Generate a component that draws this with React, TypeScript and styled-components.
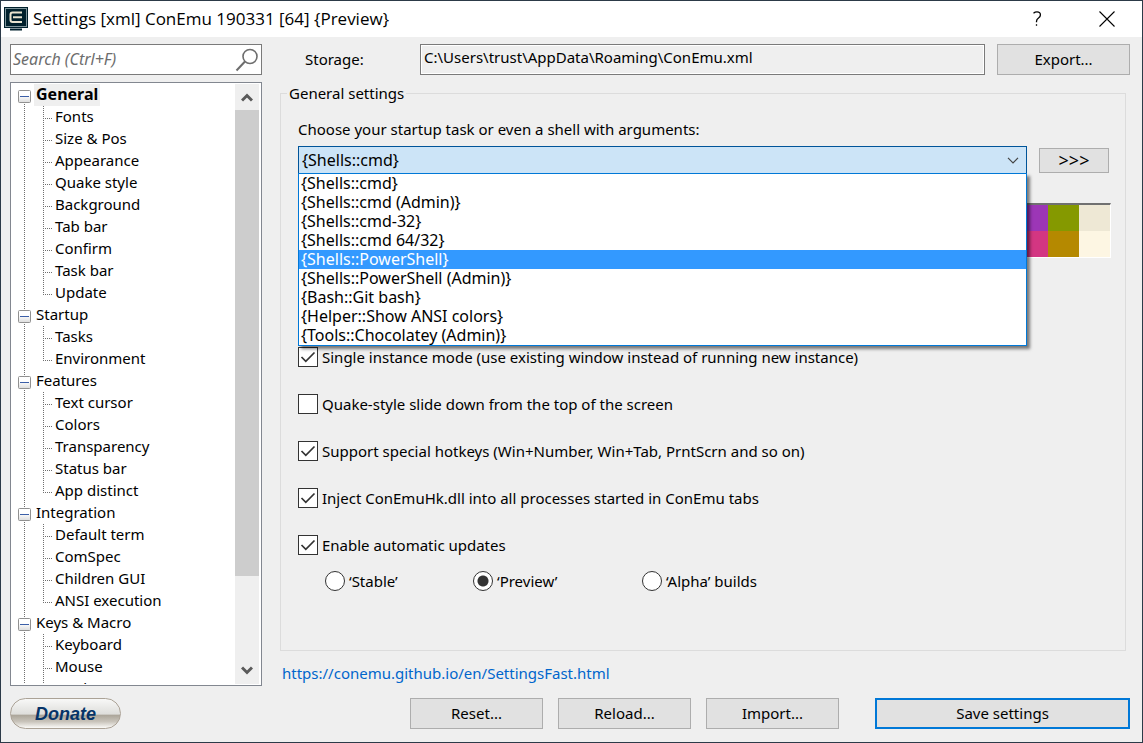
import React from "react";
import styled, { createGlobalStyle, css } from "styled-components";

const GlobalStyle = createGlobalStyle`
  *, *::before, *::after { box-sizing: border-box; }
  body { margin: 0; background: #efefef; }
  body, button, input, select {
    font-family: "Noto Sans", sans-serif;
    font-size: 15px;
    line-height: 20px;
    color: #000;
  }
  ul { list-style: none; margin: 0; padding: 0; }
`;

const dotsDown = "repeating-linear-gradient(to bottom, #707070 0 1px, transparent 1px 2px)";
const dotsAcross = "repeating-linear-gradient(to right, #707070 0 1px, transparent 1px 2px)";

const Window = styled.div`
  display: flex;
  flex-direction: column;
  height: 100vh;
  min-height: 640px;
  border: 1px solid #2c3a48;
  background: #efefef;
`;

const TitleBar = styled.header`
  display: flex;
  align-items: center;
  flex: none;
  height: 36px;
  padding: 0 12px 0 3px;
  background: #fff;
`;

const Title = styled.h1`
  flex: 1;
  margin: 0 0 0 5px;
  font-family: "Open Sans", "Noto Sans", sans-serif;
  font-size: 17px;
  font-weight: 400;
  line-height: 22px;
`;

const CaptionButton = styled.button`
  display: flex;
  align-items: center;
  justify-content: center;
  width: 46px;
  height: 36px;
  margin-left: 24px;
  padding: 0;
  border: 0;
  background: none;
`;

const Body = styled.div`
  display: grid;
  grid-template-columns: 252px minmax(0, 1fr);
  column-gap: 18px;
  flex: 1;
  min-height: 0;
  padding: 7px 12px 13px 9px;
`;

const Sidebar = styled.aside`
  display: flex;
  flex-direction: column;
  min-height: 0;
`;

const SearchBox = styled.label`
  display: flex;
  align-items: center;
  flex: none;
  height: 31px;
  padding: 0 2px;
  border: 1px solid #7a7a7a;
  background: #fff;
`;

const SearchInput = styled.input`
  flex: 1;
  min-width: 0;
  padding: 0 0 2px;
  border: 0;
  outline: 0;
  font-size: 16px;
  background: none;
  &::placeholder { color: #6d6d6d; font-style: italic; opacity: 1; }
`;

const TreePanel = styled.nav`
  display: flex;
  flex: 1;
  min-height: 0;
  margin: 7px 0 12px;
  padding: 1px;
  border: 1px solid #828790;
  background: #fff;
`;

const TreeScroll = styled.div`
  flex: 1;
  overflow: hidden;
  padding-left: 6px;
`;

const RootItem = styled.li`
  background: ${dotsDown} 6px 0 / 1px 100% no-repeat;
  &:first-child { background-position: 6px 12px; }
`;

const RootRow = styled.div`
  display: flex;
  align-items: center;
  height: 22px;
`;

const Toggle = styled.button`
  display: flex;
  width: 13px;
  height: 13px;
  margin-top: 2px;
  padding: 0;
  border: 0;
  background: none;
`;

const NodeLabel = styled.span<{ $current?: boolean }>`
  height: 22px;
  margin-left: 3px;
  padding: 0 2px;
  ${(p) => p.$current && css`
    font-size: 16px;
    font-weight: 700;
    background: #efefef;
  `}
`;

const ChildItem = styled.li`
  height: 22px;
  margin-left: 25px;
  padding-left: 12px;
  background:
    ${dotsDown} 0 0 / 1px 22px no-repeat,
    ${dotsAcross} 0 12px / 9px 1px no-repeat;
  &:last-child {
    background:
      ${dotsDown} 0 0 / 1px 12px no-repeat,
      ${dotsAcross} 0 12px / 9px 1px no-repeat;
  }
`;

const ScrollBar = styled.div`
  display: flex;
  flex-direction: column;
  width: 24px;
  margin-right: 1px;
  background: #efefef;
`;

const ScrollArrow = styled.button`
  display: flex;
  align-items: center;
  justify-content: center;
  flex: none;
  height: 26px;
  padding: 0;
  border: 0;
  background: none;
`;

const ScrollTrack = styled.div`
  flex: 1;
`;

const ScrollThumb = styled.div`
  height: 85%;
  background: #cdcdcd;
`;

const DonateButton = styled.button`
  flex: none;
  width: 111px;
  height: 31px;
  padding: 0;
  border: 1px solid #aba296;
  border-radius: 16px;
  font: italic 700 18px/28px "Liberation Sans", Arial, sans-serif;
  color: #063468;
  background: linear-gradient(to bottom, #f8f8f7 0%, #dededb 52%, #aca69a 56%, #c9c4bb 78%, #fbfaf8 100%);
`;

const Main = styled.main`
  display: flex;
  flex-direction: column;
  min-width: 0;
  min-height: 0;
`;

const StorageRow = styled.div`
  display: flex;
  gap: 12px;
  flex: none;
  height: 31px;
  padding-left: 25px;
`;

const StorageLabel = styled.label`
  width: 103px;
  line-height: 30px;
`;

const StorageInput = styled.input`
  flex: 1;
  min-width: 0;
  padding: 0 3px 5px;
  border: 1px solid #7a7a7a;
  box-shadow: inset 0 0 0 1px #fff;
  background: #efefef;
  outline: 0;
`;

const PushButton = styled.button<{ $width: number; $primary?: boolean }>`
  flex: none;
  width: ${(p) => p.$width}px;
  height: 31px;
  padding: 0 0 1px;
  border: ${(p) => (p.$primary ? "2px solid #0078d7" : "1px solid #adadad")};
  background: #e1e1e1;
`;

const Group = styled.fieldset`
  flex: 1;
  min-width: 0;
  min-height: 0;
  margin: 8px 4px 0 0;
  padding: 16px 16px 0 17px;
  border: 1px solid #dcdcdc;
`;

const Legend = styled.legend`
  margin-left: -11px;
  padding: 0 2px;
`;

const TaskLabel = styled.label`
  display: block;
  margin-bottom: 7px;
`;

const TaskRow = styled.div`
  display: flex;
  align-items: center;
  gap: 12px;
`;

const ComboBox = styled.div`
  position: relative;
  display: flex;
  flex: 1;
  height: 28px;
`;

const ComboSelect = styled.select`
  flex: 1;
  min-width: 0;
  padding: 0 3px 1px;
  appearance: none;
  border: 1px solid #005499;
  border-radius: 0;
  outline: 0;
  font-size: 16px;
  background: #cce4f7;
`;

const ComboArrow = styled.svg`
  position: absolute;
  right: 8px;
  top: 11px;
  pointer-events: none;
`;

const DropList = styled.ul`
  position: absolute;
  z-index: 2;
  top: 27px;
  left: 0;
  right: 0;
  border: 1px solid #0078d7;
  background: #fff;
  box-shadow: 3px 3px 3px rgba(0, 0, 0, 0.5);
`;

const DropItem = styled.li<{ $active?: boolean }>`
  height: 19px;
  padding-left: 2px;
  font-size: 16px;
  line-height: 19px;
  ${(p) => p.$active && css`
    color: #fff;
    background: #3399ff;
  `}
`;

const MoreButton = styled(PushButton)`
  height: 25px;
  font-size: 18px;
`;

const Palette = styled.div`
  display: grid;
  grid-template-columns: repeat(8, 31px);
  grid-auto-rows: 26px;
  width: 250px;
  margin: 29px -2px 89px auto;
  border: 1px solid #fff;
  border-top: 2px solid #707070;
`;

const Swatch = styled.div<{ $color: string }>`
  background: ${(p) => p.$color};
`;

const OptionList = styled.div`
  display: grid;
  gap: 27px;
`;

const OptionLabel = styled.label`
  display: flex;
  align-items: center;
  gap: 4px;
  height: 20px;
`;

const CheckMark = styled.span`
  display: grid;
  width: 20px;
  height: 20px;
  border: 1px solid #333;
  background: #fff;
`;

const CheckInput = styled.input`
  grid-area: 1 / 1;
  width: 18px;
  height: 18px;
  margin: 0;
  appearance: none;
  &:not(:checked) + svg { display: none; }
`;

const CheckDrawing = styled.svg`
  grid-area: 1 / 1;
  pointer-events: none;
`;

const RadioRow = styled.div`
  display: grid;
  grid-template-columns: 148px 169px auto;
  justify-content: start;
  margin: 16px 0 0 27px;
`;

const RadioInput = styled.input`
  width: 20px;
  height: 20px;
  margin: 0;
  appearance: none;
  border: 1px solid #333;
  border-radius: 50%;
  background: #fff;
  &:checked { background: radial-gradient(circle, #333 0 5px, #fff 6px); }
`;

const HelpLink = styled.a`
  align-self: flex-start;
  margin: 12px 0 15px 2px;
  color: #0066cc;
  text-decoration: none;
`;

const Footer = styled.footer`
  display: flex;
  flex: none;
  justify-content: flex-end;
  gap: 15px;
`;

const SaveSlot = styled.div`
  display: flex;
  margin-left: 21px;
`;

const tree = [
  { name: "General", children: ["Fonts", "Size & Pos", "Appearance", "Quake style", "Background", "Tab bar", "Confirm", "Task bar", "Update"] },
  { name: "Startup", children: ["Tasks", "Environment"] },
  { name: "Features", children: ["Text cursor", "Colors", "Transparency", "Status bar", "App distinct"] },
  { name: "Integration", children: ["Default term", "ComSpec", "Children GUI", "ANSI execution"] },
  { name: "Keys & Macro", children: ["Keyboard", "Mouse", "Mark/Copy"] },
];

const tasks = [
  "{Shells::cmd}",
  "{Shells::cmd (Admin)}",
  "{Shells::cmd-32}",
  "{Shells::cmd 64/32}",
  "{Shells::PowerShell}",
  "{Shells::PowerShell (Admin)}",
  "{Bash::Git bash}",
  "{Helper::Show ANSI colors}",
  "{Tools::Chocolatey (Admin)}",
];

const swatches = [
  "#002b36", "#073642", "#586e75", "#657b83", "#dc322f", "#9c36b6", "#859900", "#eee8d5",
  "#839496", "#268bd2", "#2aa198", "#93a1a1", "#cb4b16", "#d33682", "#b58900", "#fdf6e3",
];

const options = [
  { text: "Single instance mode (use existing window instead of running new instance)", on: true },
  { text: "Quake-style slide down from the top of the screen", on: false },
  { text: "Support special hotkeys (Win+Number, Win+Tab, PrntScrn and so on)", on: true },
  { text: "Inject ConEmuHk.dll into all processes started in ConEmu tabs", on: true },
  { text: "Enable automatic updates", on: true },
];

const AppIcon = () => (
  <svg width="24" height="24" viewBox="0 0 24 24" aria-hidden="true">
    <rect width="24" height="21" fill="#00202c" />
    <rect x="1.5" y="1.5" width="21" height="18" fill="none" stroke="#7f959b" />
    <path d="M18 5.500H8.500q-2 0-2 2V13q0 2 2 2H18M9 10.200h9" fill="none" stroke="#e9e4d0" strokeWidth="2" />
    <path d="M6 22.500h12" stroke="#00202c" strokeWidth="2" />
  </svg>
);

const SearchIcon = () => (
  <svg width="24" height="26" viewBox="0 0 24 26" fill="none" stroke="#6d6d6d" aria-hidden="true">
    <circle cx="15" cy="9.5" r="7" strokeWidth="1.6" />
    <path d="M10 14.500L1.500 23.500" strokeWidth="2" />
  </svg>
);

const MinusBox = () => (
  <svg width="13" height="13" viewBox="0 0 13 13" aria-hidden="true">
    <defs>
      <linearGradient id="box" x1="0" y1="0" x2="0" y2="1">
        <stop offset="0.4" stopColor="#fff" />
        <stop offset="1" stopColor="#dcdcdc" />
      </linearGradient>
    </defs>
    <rect x="0.5" y="0.5" width="12" height="12" rx="1" fill="url(#box)" stroke="#919191" />
    <path d="M2 6.500h9" stroke="#3c5fa8" />
  </svg>
);

const Chevron = ({ down }: { down?: boolean }) => (
  <svg width="12" height="10" viewBox="0 0 12 10" aria-hidden="true">
    <path d={down ? "M1 1.5L6 6.5L11 1.5" : "M1 8.5L6 3.5L11 8.5"} fill="none" stroke="#5a5a5a" strokeWidth="3" />
  </svg>
);

export default function App() {
  return (
    <>
      <GlobalStyle />
      <Window>
        <TitleBar>
          <AppIcon />
          <Title>Settings [xml] ConEmu 190331 [64] {"{Preview}"}</Title>
          <CaptionButton aria-label="Help">
            <svg width="10" height="16" viewBox="0 0 10 16" fill="none" stroke="#000" strokeWidth="1.3" aria-hidden="true">
              <path d="M1.500 2.200Q3 .9 5 .9q3.400 0 3.400 3 0 1.700-1.900 3.200-2 1.500-2 3.400v.8M4.500 13.200v1.600" />
            </svg>
          </CaptionButton>
          <CaptionButton aria-label="Close">
            <svg width="16" height="16" viewBox="0 0 16 16" stroke="#000" strokeWidth="1.1" aria-hidden="true">
              <path d="M.5.5l15 15M15.500.500l-15 15" />
            </svg>
          </CaptionButton>
        </TitleBar>
        <Body>
          <Sidebar>
            <SearchBox>
              <SearchInput type="text" placeholder="Search (Ctrl+F)" aria-label="Search" />
              <SearchIcon />
            </SearchBox>
            <TreePanel aria-label="Settings pages">
              <TreeScroll>
                <ul>
                  {tree.map((node, i) => (
                    <RootItem key={node.name}>
                      <RootRow>
                        <Toggle aria-label={"Collapse " + node.name}><MinusBox /></Toggle>
                        <NodeLabel $current={i === 0}>{node.name}</NodeLabel>
                      </RootRow>
                      <ul>
                        {node.children.map((c) => <ChildItem key={c}>{c}</ChildItem>)}
                      </ul>
                    </RootItem>
                  ))}
                </ul>
              </TreeScroll>
              <ScrollBar>
                <ScrollArrow aria-label="Scroll up"><Chevron /></ScrollArrow>
                <ScrollTrack><ScrollThumb /></ScrollTrack>
                <ScrollArrow aria-label="Scroll down"><Chevron down /></ScrollArrow>
              </ScrollBar>
            </TreePanel>
            <DonateButton>Donate</DonateButton>
          </Sidebar>
          <Main>
            <StorageRow>
              <StorageLabel htmlFor="storage">Storage:</StorageLabel>
              <StorageInput id="storage" readOnly value={"C:\\Users\\trust\\AppData\\Roaming\\ConEmu.xml"} />
              <PushButton $width={133}>Export...</PushButton>
            </StorageRow>
            <Group>
              <Legend>General settings</Legend>
              <TaskLabel htmlFor="task">Choose your startup task or even a shell with arguments:</TaskLabel>
              <TaskRow>
                <ComboBox>
                  <ComboSelect id="task" defaultValue={tasks[0]}>
                    {tasks.map((t) => <option key={t}>{t}</option>)}
                  </ComboSelect>
                  <ComboArrow width="12" height="7" viewBox="0 0 12 7" aria-hidden="true">
                    <path d="M1 .8l5 5 5-5" fill="none" stroke="#444" strokeWidth="1.2" />
                  </ComboArrow>
                  <DropList role="listbox" aria-label="Startup tasks">
                    {tasks.map((t, i) => (
                      <DropItem key={t} role="option" aria-selected={i === 4} $active={i === 4}>{t}</DropItem>
                    ))}
                  </DropList>
                </ComboBox>
                <MoreButton $width={70}>&gt;&gt;&gt;</MoreButton>
              </TaskRow>
              <Palette>
                {swatches.map((c) => <Swatch key={c} $color={c} />)}
              </Palette>
              <OptionList>
                {options.map((o) => (
                  <OptionLabel key={o.text}>
                    <CheckMark>
                      <CheckInput type="checkbox" defaultChecked={o.on} />
                      <CheckDrawing width="18" height="18" viewBox="0 0 18 18" aria-hidden="true">
                        <path d="M2.500 9l4.300 4.300L15.500 4.500" fill="none" stroke="#333" strokeWidth="1.7" />
                      </CheckDrawing>
                    </CheckMark>
                    {o.text}
                  </OptionLabel>
                ))}
              </OptionList>
              <RadioRow>
                <OptionLabel><RadioInput type="radio" name="channel" />‘Stable’</OptionLabel>
                <OptionLabel><RadioInput type="radio" name="channel" defaultChecked />‘Preview’</OptionLabel>
                <OptionLabel><RadioInput type="radio" name="channel" />‘Alpha’ builds</OptionLabel>
              </RadioRow>
            </Group>
            <HelpLink href="https://conemu.github.io/en/SettingsFast.html">https://conemu.github.io/en/SettingsFast.html</HelpLink>
            <Footer>
              <PushButton $width={133}>Reset...</PushButton>
              <PushButton $width={133}>Reload...</PushButton>
              <PushButton $width={133}>Import...</PushButton>
              <SaveSlot>
                <PushButton $width={255} $primary>Save settings</PushButton>
              </SaveSlot>
            </Footer>
          </Main>
        </Body>
      </Window>
    </>
  );
}
